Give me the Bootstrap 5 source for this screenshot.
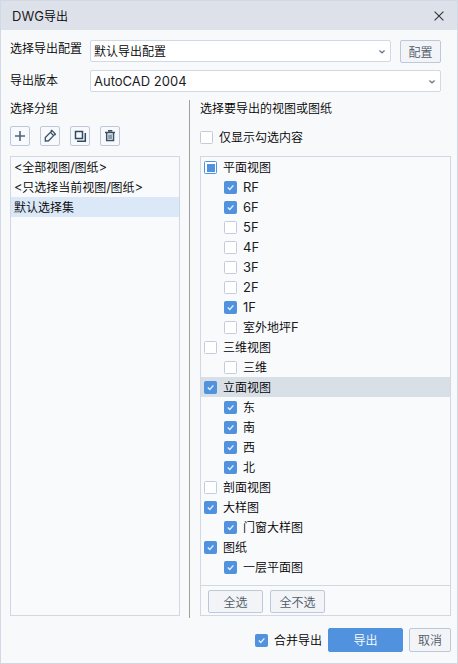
<!DOCTYPE html>
<html lang="zh-CN">
<head>
<meta charset="utf-8">
<meta name="viewport" content="width=device-width, initial-scale=1">
<title>DWG导出</title>
<link rel="stylesheet" href="https://cdn.jsdelivr.net/npm/bootstrap@5.3.0/dist/css/bootstrap.min.css">
<style>
body{font:350 12px/20px "Noto Sans CJK SC",sans-serif;color:#000;background:#f7f9fb;overflow:hidden}
.dialog{width:458px;height:664px;border:1px solid #d2d9e5}
.lt{font-family:Inter,sans-serif;font-size:13px;line-height:20px;font-weight:400;color:#1c1c1f}
.titlebar{height:29px;background:#dde1e9;padding:0 13px 0 11px}
.content{padding:10px 6px 0 9px}
.field-row{height:30px}
.field{width:80px}
.field.up{margin-top:-2px}
.pick{height:22px;border:1px solid #d0d9e6;border-radius:2px;background:#fff;padding:0 5px 0 3px}
.pick svg{margin-top:2px}
.pick.short{width:301px}.pick.long{width:351px}
.btn.act{--bs-btn-padding-x:0;--bs-btn-padding-y:0;font-size:12px;font-weight:350;line-height:20px;border-radius:2px;border:1px solid #bdc9db;background:#f2f4f8;color:#4f5966;height:23px}
.btn.tool{width:20px;height:20px;background:#f7f9fc}
.btn.go{background:#5192df;border-color:#5192df;color:#fff;width:75px;height:24px}
.btn.w-cfg{width:41px;margin-left:9px}.btn.w-all{width:55px}.btn.w-cancel{width:42px;height:24px}
.left{width:170px}
.split{width:1px;height:518px;background:#a0a0a0;margin:0 10px 0 9px}
.right{width:251px}
.heading{height:18px;line-height:16px}
.only{height:20px;gap:6px;margin-top:9px}
.pane{height:460px;border:1px solid #d1d8e4;background:#f8fafc}
.left .pane{margin-top:10px}
.right .pane{margin-top:9px}
.tools{margin-top:8px;height:20px;gap:10px}
.item{height:20px;padding-left:3px}
.item .lt{letter-spacing:-.4px}
.item.on{background:#dbe8f7}
.node{height:20px;padding-left:3px;gap:6px}
.node.kid{padding-left:23px}
.node.on{background:#d9dfe7}
.form-check-input.ck{width:13px;height:13px;margin:1px 0 0;border:1px solid #c3ccdc;border-radius:1.5px;background-color:#fff;flex:none}
.form-check-input.ck:checked{background-color:#5192df;border-color:#5192df;background-image:url("data:image/svg+xml,%3Csvg xmlns='http://www.w3.org/2000/svg' viewBox='0 0 11 11'%3E%3Cpath d='M2.8 5.4 4.8 7.4 8.4 3.4' fill='none' stroke='%23e5effb' stroke-width='1.4'/%3E%3C/svg%3E");background-size:11px 11px}
.form-check-input.ck.part{border-color:#5192df;background:linear-gradient(#5192df,#5192df) center/8px 8px no-repeat #fff}
.panefoot{height:30px;border-top:1px solid #d1d8e4;padding:4px 0 0 7px;gap:7px}
.bottom{margin-top:10px;height:24px;gap:6px}
.merge{gap:6px}
svg{display:block;flex:none}
</style>
<script defer src="https://cdn.jsdelivr.net/npm/bootstrap@5.3.0/dist/js/bootstrap.bundle.min.js"></script>
</head>
<body>
<div class="dialog">
  <header class="titlebar d-flex align-items-center justify-content-between">
    <div class="d-flex align-items-center"><span class="lt">DWG</span><span>导出</span></div>
    <svg width="10" height="10" viewBox="0 0 10 10" fill="none" stroke="#333" stroke-width="1.1"><path d="M.6.6 9.4 9.4M9.4.6.6 9.4"/></svg>
  </header>
  <main class="content">
    <div class="field-row d-flex">
      <div class="field up">选择导出配置</div>
      <div class="pick short d-flex align-items-center justify-content-between"><span>默认导出配置</span>
        <svg width="6" height="4" viewBox="0 0 6 4" fill="none" stroke="#69788c" stroke-width="1.3"><path d="M.4.6 3 2.8 5.6.6"/></svg></div>
      <button class="btn act w-cfg">配置</button>
    </div>
    <div class="field-row d-flex">
      <div class="field">导出版本</div>
      <div class="pick long d-flex align-items-center justify-content-between"><span class="lt">AutoCAD 2004</span>
        <svg width="6" height="4" viewBox="0 0 6 4" fill="none" stroke="#69788c" stroke-width="1.3"><path d="M.4.6 3 2.8 5.6.6"/></svg></div>
    </div>
    <div class="d-flex">
      <section class="left">
        <div class="heading">选择分组</div>
        <div class="tools d-flex">
          <button class="btn act tool" aria-label="新建"><svg width="18" height="18" viewBox="0 0 18 18" fill="none" stroke="#4f6475" stroke-width="1.6"><path d="M4 9H14M9 4V14"/></svg></button>
          <button class="btn act tool" aria-label="编辑"><svg width="18" height="18" viewBox="0 0 18 18" fill="none" stroke="#365065" stroke-width="1.3"><path d="M4.3 14V10.6L9.4 5.4 12.6 8.6 7.6 13.8ZM9.8 4.1 10.8 3.4 14.4 7 13.7 8.1M9.4 5.4 10.6 4.2M12.6 8.6 13.8 7.4"/></svg></button>
          <button class="btn act tool" aria-label="复制"><svg width="18" height="18" viewBox="0 0 18 18" fill="none" stroke="#304a5f" stroke-width="1.5"><path d="M4.5 4.5H11.5V11.5H4.5ZM14.3 6V14.3H6"/></svg></button>
          <button class="btn act tool" aria-label="删除"><svg width="18" height="18" viewBox="0 0 18 18" fill="none" stroke="#365065" stroke-width="1.5"><path d="M4 5.5H14M7 3.7H11.3M5.7 5.5V13.5H12.5V5.5"/><path d="M7.2 7.5H11V12H7.2Z" fill="#8b9aa7" stroke="none"/></svg></button>
        </div>
        <div class="pane">
          <div class="item d-flex align-items-center"><span class="lt">&lt;</span>全部视图<span class="lt">/</span>图纸<span class="lt">&gt;</span></div>
          <div class="item d-flex align-items-center"><span class="lt">&lt;</span>只选择当前视图<span class="lt">/</span>图纸<span class="lt">&gt;</span></div>
          <div class="item on d-flex align-items-center">默认选择集</div>
        </div>
      </section>
      <div class="split"></div>
      <section class="right">
        <div class="heading">选择要导出的视图或图纸</div>
        <label class="only d-flex align-items-center"><input type="checkbox" class="form-check-input ck">仅显示勾选内容</label>
        <div class="pane d-flex flex-column justify-content-between">
          <div>
            <label class="node d-flex align-items-center"><input type="checkbox" class="form-check-input ck part">平面视图</label>
            <label class="node kid d-flex align-items-center"><input type="checkbox" class="form-check-input ck" checked><span class="lt">RF</span></label>
            <label class="node kid d-flex align-items-center"><input type="checkbox" class="form-check-input ck" checked><span class="lt">6F</span></label>
            <label class="node kid d-flex align-items-center"><input type="checkbox" class="form-check-input ck"><span class="lt">5F</span></label>
            <label class="node kid d-flex align-items-center"><input type="checkbox" class="form-check-input ck"><span class="lt">4F</span></label>
            <label class="node kid d-flex align-items-center"><input type="checkbox" class="form-check-input ck"><span class="lt">3F</span></label>
            <label class="node kid d-flex align-items-center"><input type="checkbox" class="form-check-input ck"><span class="lt">2F</span></label>
            <label class="node kid d-flex align-items-center"><input type="checkbox" class="form-check-input ck" checked><span class="lt">1F</span></label>
            <label class="node kid d-flex align-items-center"><input type="checkbox" class="form-check-input ck"><span class="d-flex align-items-center">室外地坪<span class="lt">F</span></span></label>
            <label class="node d-flex align-items-center"><input type="checkbox" class="form-check-input ck">三维视图</label>
            <label class="node kid d-flex align-items-center"><input type="checkbox" class="form-check-input ck">三维</label>
            <label class="node on d-flex align-items-center"><input type="checkbox" class="form-check-input ck" checked>立面视图</label>
            <label class="node kid d-flex align-items-center"><input type="checkbox" class="form-check-input ck" checked>东</label>
            <label class="node kid d-flex align-items-center"><input type="checkbox" class="form-check-input ck" checked>南</label>
            <label class="node kid d-flex align-items-center"><input type="checkbox" class="form-check-input ck" checked>西</label>
            <label class="node kid d-flex align-items-center"><input type="checkbox" class="form-check-input ck" checked>北</label>
            <label class="node d-flex align-items-center"><input type="checkbox" class="form-check-input ck">剖面视图</label>
            <label class="node d-flex align-items-center"><input type="checkbox" class="form-check-input ck" checked>大样图</label>
            <label class="node kid d-flex align-items-center"><input type="checkbox" class="form-check-input ck" checked>门窗大样图</label>
            <label class="node d-flex align-items-center"><input type="checkbox" class="form-check-input ck" checked>图纸</label>
            <label class="node kid d-flex align-items-center"><input type="checkbox" class="form-check-input ck" checked>一层平面图</label>
          </div>
          <div class="panefoot d-flex">
            <button class="btn act w-all">全选</button>
            <button class="btn act w-all">全不选</button>
          </div>
        </div>
      </section>
    </div>
    <footer class="bottom d-flex align-items-center justify-content-end">
      <label class="merge d-flex align-items-center"><input type="checkbox" class="form-check-input ck" checked><span>合并导出</span></label>
      <button class="btn act go">导出</button>
      <button class="btn act w-cancel">取消</button>
    </footer>
  </main>
</div>
</body>
</html>
